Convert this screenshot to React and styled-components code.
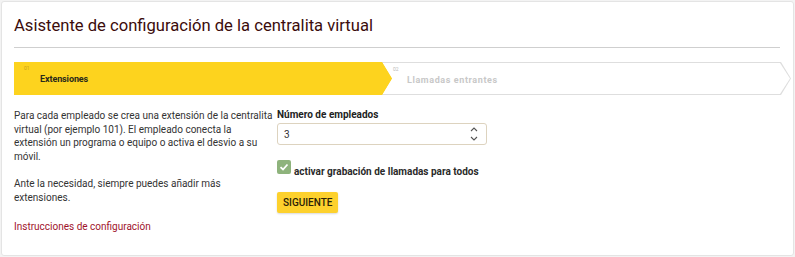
import React, { useState } from 'react'
import styled, { createGlobalStyle } from 'styled-components'

const GlobalStyle = createGlobalStyle`
  html, body {
    margin: 0;
    padding: 0;
    background: #f3f3f3;
    font-family: Roboto, "Liberation Sans", Arial, sans-serif;
  }
`

const Card = styled.div`
  box-sizing: border-box;
  margin: 1px 1px 0 1px;
  height: 255px;
  background: #fff;
  border: 1px solid #e4e4e4;
  border-radius: 3px;
  padding: 13px 13px 0 12px;
`

const Title = styled.h1`
  margin: 0;
  font-size: 16.6px;
  font-weight: 400;
  line-height: 22px;
  color: #3b0c0c;
`

const Divider = styled.hr`
  margin: 10px 0 14px 0;
  border: 0;
  border-top: 1px solid #cfcfcf;
`

const Stepper = styled.div`
  display: flex;
  height: 33px;
  margin-right: -11px;
`

const arrow = 'polygon(0 0, calc(100% - 10px) 0, 100% 50%, calc(100% - 10px) 100%, 0 100%)'

const Step = styled.div`
  box-sizing: border-box;
  height: 33px;
  clip-path: ${arrow};
  background: ${p => (p.$active ? '#fdd31e' : '#dedede')};
  border-radius: ${p => (p.$active ? '3px 0 0 3px' : '0')};
  flex: ${p => (p.$active ? '0 0 378px' : '1 1 auto')};
  margin-left: ${p => (p.$active ? '0' : '-10px')};
  z-index: ${p => (p.$active ? 2 : 1)};
  padding: ${p => (p.$active ? '0' : '1px')};
`

const StepInner = styled.div`
  box-sizing: border-box;
  height: 100%;
  clip-path: ${arrow};
  background: ${p => (p.$active ? '#fdd31e' : '#fff')};
  padding: 3px 0 0 10px;
`

const StepNum = styled.div`
  font-size: 5px;
  line-height: 6px;
  color: ${p => (p.$active ? '#c9a21a' : '#bbb')};
`

const StepLabel = styled.div`
  margin: 3px 0 0 ${p => (p.$active ? '16px' : '14px')};
  font-size: 9px;
  font-weight: 700;
  color: ${p => (p.$active ? '#2a2a1a' : '#c8c8c8')};
  letter-spacing: ${p => (p.$active ? '-0.1px' : '0.6px')};
`

const Body = styled.div`
  display: grid;
  grid-template-columns: 263px 210px;
  margin-top: 14px;
`

const Text = styled.p`
  margin: 0 0 13px 0;
  font-size: 10px;
  line-height: 13.7px;
  color: #333;
`

const Link = styled.a`
  display: block;
  margin-top: 17px;
  font-size: 10px;
  color: #a0132b;
  text-decoration: none;
`

const Form = styled.div`
  display: flex;
  flex-direction: column;
  align-items: flex-start;
`

const Label = styled.label`
  font-size: 10px;
  font-weight: 700;
  line-height: 13px;
  color: #222;
  margin-top: -1px;
`

const NumberBox = styled.div`
  box-sizing: border-box;
  display: flex;
  align-items: center;
  justify-content: space-between;
  width: 210px;
  height: 22px;
  margin-top: 2px;
  border: 1px solid #ddd3bf;
  border-radius: 3px;
  padding: 0 8px 0 6px;
  font-size: 10px;
  color: #333;
`

const Spinner = styled.svg`
  width: 8px;
  height: 16px;
`

const CheckRow = styled.div`
  display: flex;
  align-items: flex-end;
  gap: 3px;
  margin-top: 15px;
`

const CheckBox = styled.span`
  display: flex;
  align-items: center;
  justify-content: center;
  width: 14px;
  height: 14px;
  border-radius: 2px;
  background: #8eb37c;
`

const CheckLabel = styled.span`
  font-size: 10px;
  font-weight: 700;
  color: #2a2a2a;
  line-height: 11px;
  margin-bottom: -3px;
`

const Button = styled.button`
  margin-top: 18px;
  height: 21px;
  padding: 0 6px;
  border: 0;
  border-radius: 2px;
  background: #fdd12d;
  box-shadow: 0 1px 2px rgba(0, 0, 0, 0.15);
  font-family: inherit;
  font-size: 10px;
  font-weight: 500;
  color: #2b2208;
  cursor: pointer;
`

const steps = [
  { num: '01', label: 'Extensiones', active: true },
  { num: '02', label: 'Llamadas entrantes', active: false },
]

export default function App() {
  const [count] = useState(3)
  return (
    <>
      <GlobalStyle />
      <Card>
        <Title>Asistente de configuración de la centralita virtual</Title>
        <Divider />
        <Stepper>
          {steps.map(s => (
            <Step key={s.num} $active={s.active}>
              <StepInner $active={s.active}>
                <StepNum $active={s.active}>{s.num}</StepNum>
                <StepLabel $active={s.active}>{s.label}</StepLabel>
              </StepInner>
            </Step>
          ))}
        </Stepper>
        <Body>
          <div>
            <Text>
              Para cada empleado se crea una extensión de la centralita virtual (por ejemplo 101). El
              empleado conecta la extensión un programa o equipo o activa el desvio a su móvil.
            </Text>
            <Text>Ante la necesidad, siempre puedes añadir más extensiones.</Text>
            <Link href="#">Instrucciones de configuración</Link>
          </div>
          <Form>
            <Label>Número de empleados</Label>
            <NumberBox>
              <span>{count}</span>
              <Spinner viewBox="0 0 8 16">
                <path d="M1 5 L4 2 L7 5 M1 11 L4 14 L7 11" fill="none" stroke="#555" strokeWidth="1.1" />
              </Spinner>
            </NumberBox>
            <CheckRow>
              <CheckBox>
                <svg width="10" height="10" viewBox="0 0 10 10">
                  <path d="M1.5 5.2 L4 7.5 L8.5 2.5" fill="none" stroke="#fff" strokeWidth="1.8" />
                </svg>
              </CheckBox>
              <CheckLabel>activar grabación de llamadas para todos</CheckLabel>
            </CheckRow>
            <Button>SIGUIENTE</Button>
          </Form>
        </Body>
      </Card>
    </>
  )
}
